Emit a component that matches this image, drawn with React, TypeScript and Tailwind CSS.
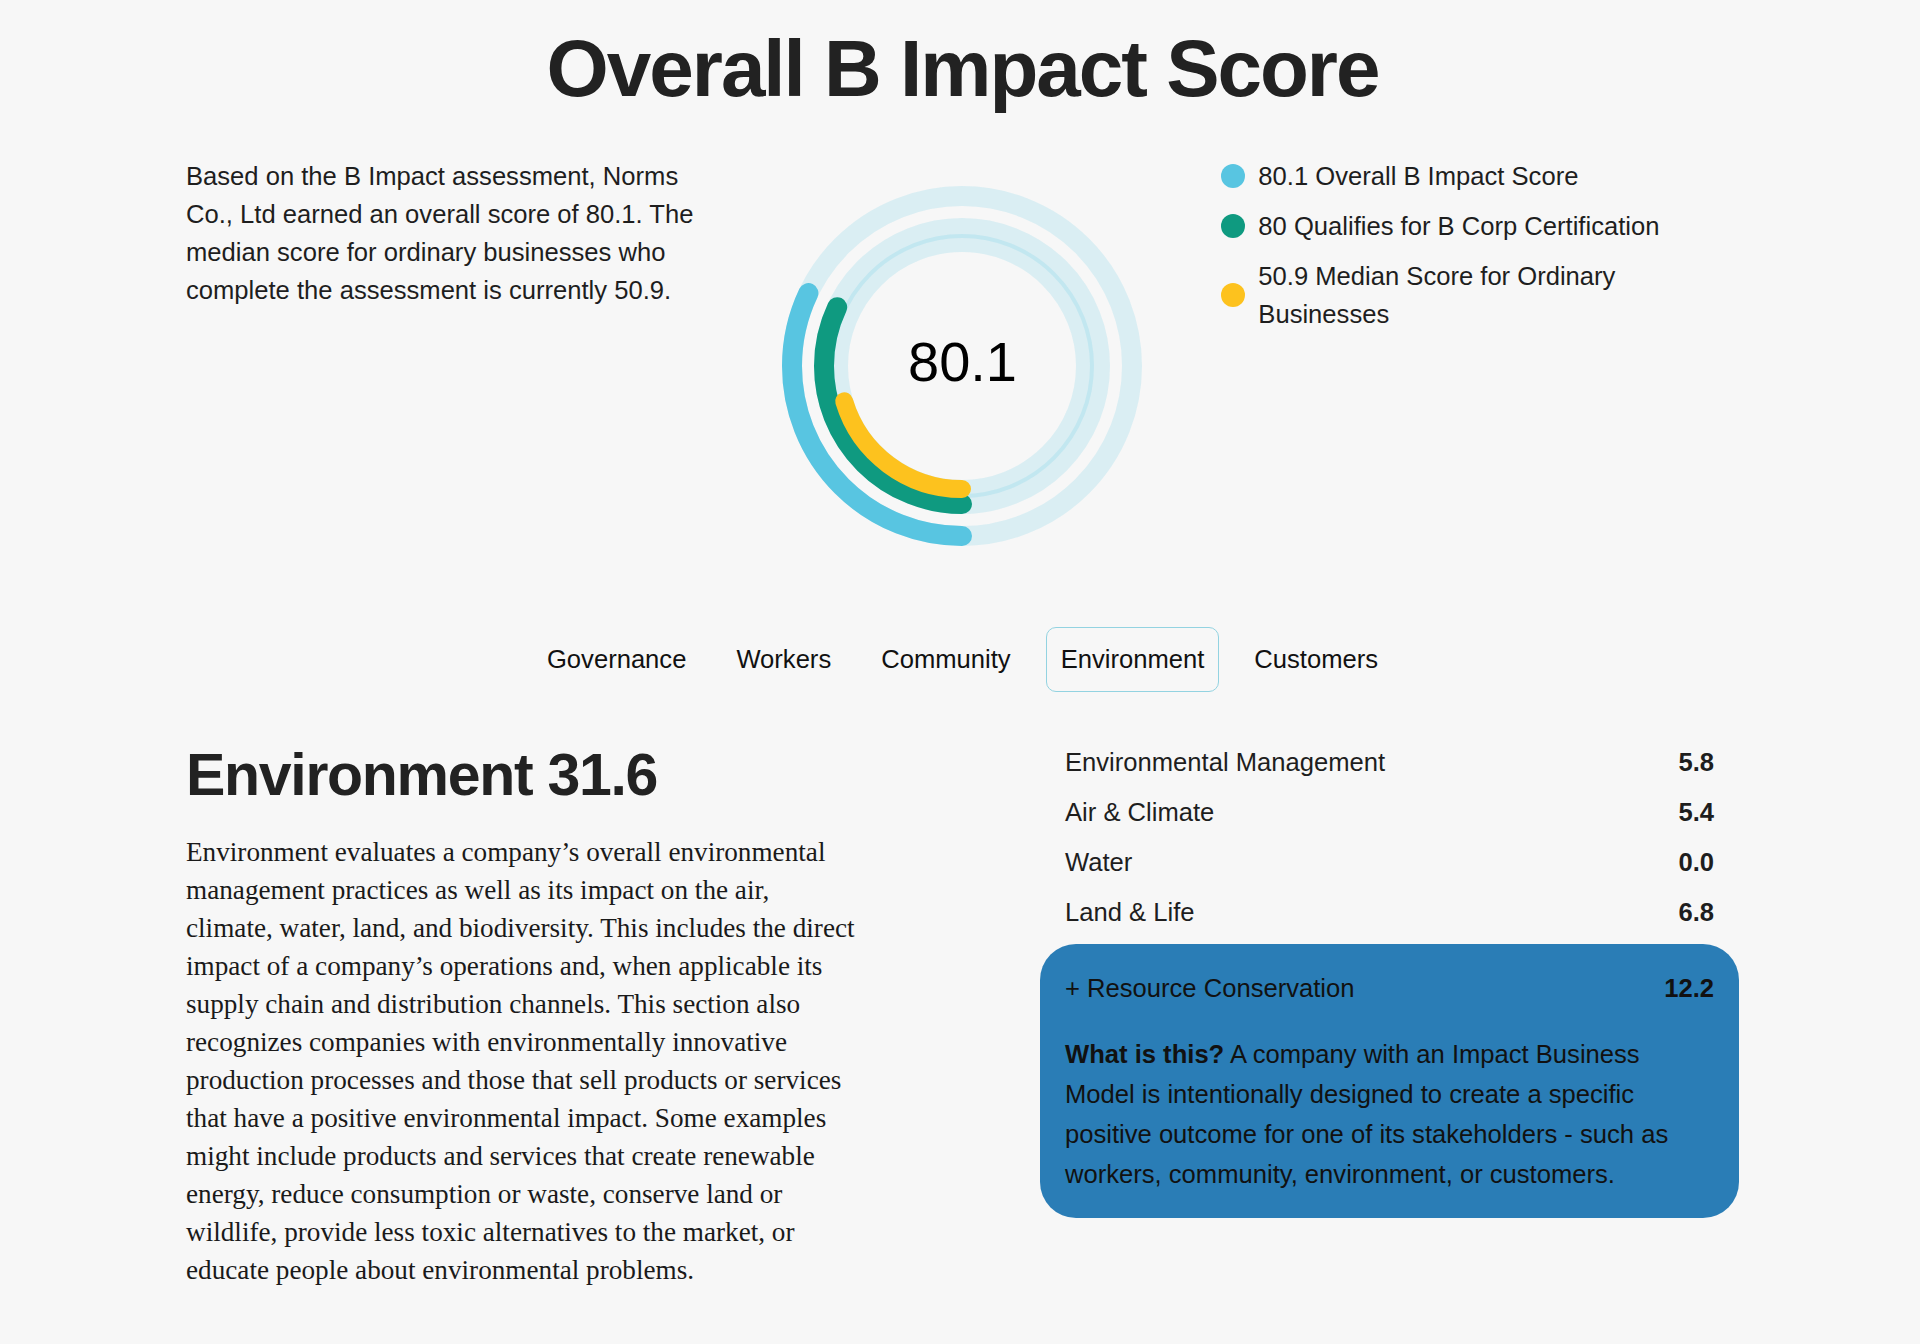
import React, { useState } from "react"

const MAX_SCORE = 250
const SIZE = 362
const C = SIZE / 2

const rings = [
  { key: "overall", r: 170, width: 20, value: 80.1, color: "#58c5e1" },
  { key: "bcorp", r: 138, width: 20, value: 80, color: "#0f9a80" },
  { key: "median", r: 123, width: 18, value: 50.9, color: "#fdc21e" },
]

const legend = [
  { color: "bg-[#58c5e1]", label: "80.1 Overall B Impact Score" },
  { color: "bg-[#0f9a80]", label: "80 Qualifies for B Corp Certification" },
  { color: "bg-[#fdc21e]", label: "50.9 Median Score for Ordinary Businesses" },
]

const tabs = ["Governance", "Workers", "Community", "Environment", "Customers"]

const breakdown = [
  { name: "Environmental Management", score: "5.8" },
  { name: "Air & Climate", score: "5.4" },
  { name: "Water", score: "0.0" },
  { name: "Land & Life", score: "6.8" },
]

// kept as lines so the column wraps like the original layout
const environmentCopy = [
  "Environment evaluates a company’s overall environmental",
  "management practices as well as its impact on the air,",
  "climate, water, land, and biodiversity. This includes the direct",
  "impact of a company’s operations and, when applicable its",
  "supply chain and distribution channels. This section also",
  "recognizes companies with environmentally innovative",
  "production processes and those that sell products or services",
  "that have a positive environmental impact. Some examples",
  "might include products and services that create renewable",
  "energy, reduce consumption or waste, conserve land or",
  "wildlife, provide less toxic alternatives to the market, or",
  "educate people about environmental problems.",
]

function ScoreRing({ score }: { score: number }) {
  return (
    <div className="relative h-[362px] w-[362px]">
      <svg width={SIZE} height={SIZE} viewBox={`0 0 ${SIZE} ${SIZE}`}>
        {rings.map((ring) => (
          <circle
            key={`track-${ring.key}`}
            cx={C}
            cy={C}
            r={ring.r}
            fill="none"
            stroke="rgba(88,197,225,0.18)"
            strokeWidth={ring.width}
          />
        ))}
        {rings.map((ring) => {
          const circ = 2 * Math.PI * ring.r
          const len = (ring.value / MAX_SCORE) * circ
          return (
            <circle
              key={ring.key}
              cx={C}
              cy={C}
              r={ring.r}
              fill="none"
              stroke={ring.color}
              strokeWidth={ring.width}
              strokeLinecap="round"
              strokeDasharray={`${len} ${circ}`}
              transform={`rotate(90 ${C} ${C})`}
            />
          )
        })}
      </svg>
      <div className="absolute inset-0 flex items-center justify-center pb-[8px] text-[56px] leading-none text-black">
        {score}
      </div>
    </div>
  )
}

export default function App() {
  const [active, setActive] = useState("Environment")

  return (
    <div className="min-h-screen bg-[#f7f7f7] pl-[5px] font-['Liberation_Sans',Arial,sans-serif] text-[#1e1e1e]">
      <div className="mx-auto w-[1553px] pt-[29px] pb-[50px]">
        <h1 className="text-center text-[80px] font-bold leading-[80px] tracking-[-0.025em] text-[#222]">
          Overall B Impact Score
        </h1>

        <section className="mt-[48px] grid grid-cols-3">
          <p className="text-[25.6px] leading-[38px]">
            Based on the B Impact assessment, Norms Co., Ltd earned an overall score of 80.1. The median score for
            ordinary businesses who complete the assessment is currently 50.9.
          </p>
          <div className="flex justify-center pt-[28px]">
            <ScoreRing score={80.1} />
          </div>
          <ul className="flex flex-col gap-[12px]">
            {legend.map((item) => (
              <li key={item.label} className="flex items-center gap-[13px]">
                <span className={`h-[24px] w-[24px] shrink-0 rounded-full ${item.color}`} />
                <span className="max-w-[440px] text-[25.6px] leading-[38px]">{item.label}</span>
              </li>
            ))}
          </ul>
        </section>

        <nav className="mt-[80px] flex justify-center gap-[20px]">
          {tabs.map((tab) => (
            <button
              key={tab}
              onClick={() => setActive(tab)}
              className={`flex h-[65px] items-center rounded-[10px] border-[1.5px] px-[14px] text-[25.6px] text-[#111] ${
                active === tab ? "border-[#93d3e1]" : "border-transparent"
              }`}
            >
              {tab}
            </button>
          ))}
        </nav>

        <section className="mt-[48px] flex justify-between">
          <div className="w-[684px]">
            <h2 className="text-[59px] font-bold leading-[71px] tracking-[-0.022em] text-[#222]">Environment 31.6</h2>
            <p className="mt-[22px] font-['Liberation_Serif','Times_New_Roman',serif] text-[27.2px] leading-[38px] text-[#1a1a1a]">
              {environmentCopy.map((line) => (
                <span key={line} className="block">
                  {line}
                </span>
              ))}
            </p>
          </div>

          <div className="-mt-[3px] w-[699px]">
            <ul className="px-[25px]">
              {breakdown.map((row) => (
                <li key={row.name} className="flex justify-between text-[25.6px] leading-[50px]">
                  <span>{row.name}</span>
                  <span className="font-bold">{row.score}</span>
                </li>
              ))}
            </ul>
            <div className="mt-[7px] rounded-[36px] bg-[#2a7db6] px-[25px] pt-[25px] pb-[24px] text-[#111]">
              <div className="flex justify-between text-[25.6px] leading-[38px]">
                <span>+ Resource Conservation</span>
                <span className="font-bold">12.2</span>
              </div>
              <p className="mt-[27px] max-w-[625px] text-[25.6px] leading-[40px]">
                <strong className="font-bold">What is this?</strong> A company with an Impact Business Model is
                intentionally designed to create a specific positive outcome for one of its stakeholders - such as
                workers, community, environment, or customers.
              </p>
            </div>
          </div>
        </section>
      </div>
    </div>
  )
}
